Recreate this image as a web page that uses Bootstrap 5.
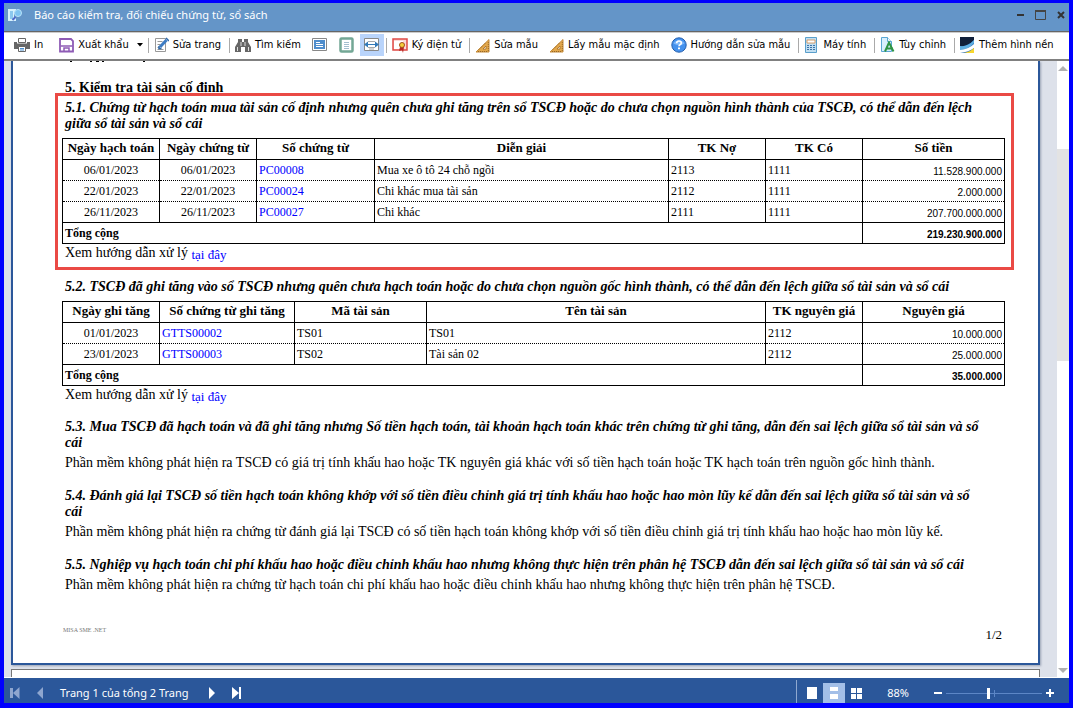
<!DOCTYPE html>
<html lang="vi">
<head>
<meta charset="utf-8">
<meta name="viewport" content="width=device-width, initial-scale=1">
<title>Báo cáo kiểm tra, đối chiếu chứng từ, sổ sách</title>
<link href="https://cdn.jsdelivr.net/npm/bootstrap@5.3.0/dist/css/bootstrap.min.css" rel="stylesheet">
<script src="https://cdn.jsdelivr.net/npm/bootstrap@5.3.0/dist/js/bootstrap.bundle.min.js" defer></script>
<style>
body{font-family:"Noto Sans",sans-serif;font-size:11px;color:#000;line-height:16px}
button{border:0;background:none;padding:0;color:inherit}
svg{flex:none;display:block}
.app{height:100vh;border:4px solid #00f;border-top-width:3px;border-bottom-width:5px}
.titlebar{height:29px;background:#6495c8;border-bottom:1px solid #666;color:#fff;padding:0 2px 4px 4px}
.titlebar h1{font-size:11px;font-weight:400;line-height:16px;margin-left:12px}
.tools{height:29px;border-top:1px solid #ccc;border-bottom:2px solid #808080;padding:0 0 1px 10px;white-space:nowrap;background:#fff;font-family:"DejaVu Sans Condensed","DejaVu Sans",sans-serif}
.tool{display:flex;align-items:center;gap:4px;height:22px}
.tool + .tool{margin-left:11px}
.tool.on{background:#b9d4fb;width:24px;justify-content:center;margin-left:5px}
.tool.on + .sep{margin-left:2px}
.sep{width:1px;height:15px;background:#aaa;margin:0 5px 0 8px}
.canvas{background:#dde1ea;min-width:0}
.sheet{background:#fff;border:2px solid #2b579a;border-top:0;margin:0 17px 0 7px;padding:0 24px 20px 42px;box-shadow:1px 1px 2px #9aa3b5;font-family:"Liberation Serif",serif;font-size:14px}
.sheet-next{border:1px solid #777;border-bottom-color:#ccc;background:#fff;margin:4px 17px 0 7px;height:9px}
.sheet h2,.sheet h3{font-size:14px;line-height:16px;font-weight:700;margin:0;padding:0 18px 0 3px}
.sheet h2{margin:17px 0 -3px;padding-left:10px}
.sheet h3{font-style:italic}
.sheet p{margin:0;padding-left:3px;line-height:20px}
.part{padding:0 9px 0 7px;margin-top:15px}
.part h3 + p{margin-top:2px}
.marked{position:relative;background:#fff;border:3px solid #ea4a45;padding:4px 6px 4px 4px;margin:0}
.marked + .part{margin-top:9px}
.sheet .guide{line-height:18px;margin-bottom:1px}
.grid-table{width:100%;table-layout:fixed;border-collapse:collapse;font-size:12px;margin-top:6px}
.grid-table th,.grid-table td{border:1px solid #000;padding:1px 2px 0;height:21px;line-height:16px}
.grid-table th{text-align:center;font-size:13px;padding:0 2px 1px}
.grid-table tbody td{border-top:1px dotted #000;border-bottom:1px dotted #000}
.grid-table tbody tr:first-child td{border-top:1px solid #000}
.grid-table tbody tr:last-child td{border-bottom:1px solid #000}
.grid-table tfoot td{font-weight:700}
.grid-table a,.sheet p a{color:#00f;text-decoration:none}
.sheet p a{font-size:13px;vertical-align:-2px;line-height:1}
.grid-table .amt{font-family:"Liberation Sans",sans-serif;font-size:10px;text-align:right;padding-top:4px}
.c-code{width:97px}.c-doc{width:118px}.c-inc{width:135px}.c-asset{width:132px}.c-sum{width:142px}
.brand{font-size:6px;color:#777;line-height:6px}
.folio{font-size:13px}
.scroll{width:16px;background:#fff;padding-top:5px}
.thumb{background:#e3e3e3;width:12px;height:212px;margin-top:78px}
.status{height:26px;background:#2b579a;border-top:1px solid #fff;color:#fff;padding:0 14px 0 6px}
.status > *{margin-top:5px}
.status .divider{width:1px;align-self:stretch;background:#8fa8d0;margin:2px 4px 0 0}
.view{width:22px;height:20px;display:flex;align-items:center;justify-content:center}
.view.on{background:#a3bfe8}
.zoomer{appearance:none;background:linear-gradient(#5c86c6,#5c86c6) center/100% 1px no-repeat,linear-gradient(#5c86c6,#5c86c6) 51% center/1px 7px no-repeat;width:96px;height:12px;margin:5px 3px 0}
.zoomer::-webkit-slider-thumb{appearance:none;width:3px;height:11px;background:#fff}
</style>
</head>
<body>
<svg width="0" height="0" class="position-absolute" aria-hidden="true">
<symbol id="ruler" viewBox="0 0 15 15"><path d="M1 14L14 1.500V14z" fill="#e3a84c" stroke="#c48a38"/><path d="M8 11l3-3v3z" fill="#fff" stroke="#a36c24" stroke-width=".8"/><path d="M3 13.500h10M13.300 4v9M4 11.500l7-7" stroke="#8a5c1e" stroke-width=".8" stroke-dasharray="1 1"/></symbol>
</svg>
<div class="app d-flex flex-column overflow-hidden">
<header class="titlebar d-flex align-items-center">
<svg width="14" height="14" viewBox="0 0 14 14"><path d="M0 1h8v3H6v6h2v3H0z" fill="#d6f1fc"/><path d="M2 3h3v8H2z" fill="#8cc8ee"/><circle cx="10" cy="5" r="3.500" fill="#7fc3f0" stroke="#b8e2f8"/><path d="M4.500 12l3-3" stroke="#5068c8" stroke-width="2"/></svg>
<h1 class="mb-0">Báo cáo kiểm tra, đối chiếu chứng từ, sổ sách</h1>
<div class="ms-auto d-flex gap-2">
<button aria-label="Thu nhỏ"><svg width="12" height="12"><path d="M2 6h7" stroke="#333" stroke-width="2"/></svg></button>
<button aria-label="Phóng to"><svg width="12" height="12"><path d="M.500 2v8.500h10V2" fill="none" stroke="#444"/><path d="M0 2h11" stroke="#444" stroke-width="2"/></svg></button>
<button aria-label="Đóng"><svg width="12" height="12"><path d="M3 3l6 6M9 3l-6 6" stroke="#333" stroke-width="2"/></svg></button>
</div>
</header>
<div class="tools d-flex align-items-center" role="toolbar">
<button class="tool"><svg width="16" height="16"><path d="M4.500 1.500h7v4h-7z" fill="#fff" stroke="#666"/><path d="M0 5h3v1.500h10V5h3v7H0z" fill="#666"/><path d="M4.500 9.500h7v5h-7z" fill="#fff" stroke="#666"/><path d="M6 11.500h4M6 13h4" stroke="#4b8fd0"/></svg>In</button>
<button class="tool ms-3"><svg width="15" height="16"><path d="M1 2h11l2 2v10.500H1z" fill="#fff" stroke="#8e5bb5" stroke-width="1.800"/><path d="M1.500 9h12" stroke="#8e5bb5" stroke-width="1.500"/><path d="M5 14v-3h5v3" fill="none" stroke="#8e5bb5" stroke-width="1.500"/></svg>Xuất khẩu<svg class="ms-1" width="7" height="4"><path d="M0 0h6L3 3.500z"/></svg></button>
<span class="sep ms-1"></span>
<button class="tool"><svg width="15" height="16"><path d="M1.500 1.500h10v13h-10z" fill="#fff" stroke="#999"/><path d="M3.500 4.500h5M3.500 7.500h3M3.500 10.500h2M3.500 12.500h6" stroke="#999"/><path d="M6 10l6.500-7" stroke="#3d7cc4" stroke-width="3"/><path d="M12 1l3 3M5 9v2.500h2.500" fill="none" stroke="#2d68aa" stroke-width="1.500"/></svg>Sửa trang</button>
<span class="sep"></span>
<button class="tool"><svg width="16" height="15"><path d="M3 1h4v3h2V1h4v3l3 5v5h-6V9H6v5H0V9l3-5z" fill="#666"/><path d="M6 4v4M10 4v4M2.500 9v4M13.500 9v4" stroke="#ddd"/></svg>Tìm kiếm</button>
<button class="tool" aria-label="Toàn màn hình"><svg width="16" height="14"><path d="M.500.500h14v12H.500z" fill="#fff" stroke="#888"/><path d="M2 2h11v9H2z" fill="#4f8dcc"/><path d="M4 4.500h4M4 6.500h7M4 8.500h7" stroke="#fff"/></svg></button>
<button class="tool" aria-label="Toàn trang"><svg width="16" height="16"><rect x="1.500" y="1.500" width="12" height="13" rx="1" fill="#fff" stroke="#73a795" stroke-width="2.500"/><path d="M5 5.500h5M5 7.500h5M5 9.500h5M5 11.500h5" stroke="#a4bfd0"/></svg></button>
<button class="tool on" aria-label="Vừa chiều rộng"><svg width="16" height="14"><path d="M.500.500h14v12H.500z" fill="#fff" stroke="#888"/><path d="M4 3.500h7M4 9.500h7M5 11h5" stroke="#aaa"/><path d="M3 6.500h9" stroke="#347ab8"/><path d="M0 6.500l4-3v6zM15 6.500l-4-3v6z" fill="#347ab8"/></svg></button>
<span class="sep"></span>
<button class="tool"><svg width="16" height="16"><path d="M1 2h14v11H1z" fill="#fbd9d7" stroke="#e04a45" stroke-width="1.500"/><path d="M2 4h9v8H2z" fill="#fff"/><path d="M8 10l-1 4 3-1 1 3 1-6z" fill="#b62a24"/><circle cx="10" cy="8" r="2.500" fill="#f3cf3b" stroke="#a8501c"/></svg>Ký điện tử</button>
<span class="sep"></span>
<button class="tool"><svg width="15" height="15"><use href="#ruler"/></svg>Sửa mẫu</button>
<button class="tool"><svg width="15" height="15"><use href="#ruler"/></svg>Lấy mẫu mặc định</button>
<button class="tool"><svg width="16" height="16"><circle cx="8" cy="8" r="7.200" fill="#4592ee" stroke="#235fae"/><path d="M2.500 6.500a6 5 0 0111 0q-5.500 3-11 0z" fill="#80b9fa"/><path d="M5.700 6.200q0-2.200 2.300-2.200t2.300 2q0 1.200-1.300 1.800-1 .5-1 1.500" fill="none" stroke="#fff" stroke-width="1.600"/><path d="M7 10.500h2v1.800H7z" fill="#fff"/></svg>Hướng dẫn sửa mẫu</button>
<span class="sep"></span>
<button class="tool"><svg width="15" height="16"><path d="M1.500.500h11v15h-11z" fill="#c2dff2" stroke="#5a9fcb"/><path d="M3 3h8v3H3z" fill="#fff" stroke="#d18b4a" stroke-width=".8"/><path d="M3 8.500h8M3 10.500h8M3 12.500h8" stroke="#3d74a8" stroke-dasharray="2 1"/></svg>Máy tính</button>
<span class="sep"></span>
<button class="tool"><svg width="15" height="16"><path d="M1.500.500h6l4 4v10h-10z" fill="#d8effc" stroke="#5aa7d4"/><path d="M7.500.500v4h4" fill="#fff" stroke="#5aa7d4"/><path d="M5 14.500l4-9 4.500 9M6 11.500h7" fill="none" stroke="#2f9444" stroke-width="2"/></svg>Tùy chỉnh</button>
<span class="sep"></span>
<button class="tool"><svg width="15" height="16"><path d="M0 0h14v16H0z" fill="#2b6fb8"/><path d="M0 0h14v3Q7 10 0 9z" fill="#11203a"/><path d="M0 9q8 1 14-6v3q-5 6-14 7z" fill="#5fb0e4"/><path d="M0 13q9-1 14-6v4q-5 4-14 5z" fill="#fff"/><path d="M4 16q6-1 10-5v5z" fill="#f8d72e"/></svg>Thêm hình nền</button>
</div>
<main class="d-flex flex-grow-1 overflow-hidden">
<div class="canvas flex-grow-1">
<article class="sheet">
<svg width="92" height="2" aria-hidden="true"><path d="M15 .500h2M35 .500h2M41 .500h3M47 .500h2M88 .500h2" stroke="#000"/></svg>
<h2>5. Kiểm tra tài sản cố định</h2>
<section class="part marked">
<h3>5.1. Chứng từ hạch toán mua tài sản cố định nhưng quên chưa ghi tăng trên sổ TSCĐ hoặc do chưa chọn nguồn hình thành của TSCĐ, có thể dẫn đến lệch giữa sổ tài sản và sổ cái</h3>
<table class="grid-table">
<colgroup><col class="c-code"><col class="c-code"><col class="c-doc"><col><col class="c-code"><col class="c-code"><col class="c-sum"></colgroup>
<thead><tr><th>Ngày hạch toán</th><th>Ngày chứng từ</th><th>Số chứng từ</th><th>Diễn giải</th><th>TK Nợ</th><th>TK Có</th><th>Số tiền</th></tr></thead>
<tbody>
<tr><td class="text-center">06/01/2023</td><td class="text-center">06/01/2023</td><td><a href="#">PC00008</a></td><td>Mua xe ô tô 24 chỗ ngồi</td><td>2113</td><td>1111</td><td class="amt">11.528.900.000</td></tr>
<tr><td class="text-center">22/01/2023</td><td class="text-center">22/01/2023</td><td><a href="#">PC00024</a></td><td>Chi khác mua tài sản</td><td>2112</td><td>1111</td><td class="amt">2.000.000</td></tr>
<tr><td class="text-center">26/11/2023</td><td class="text-center">26/11/2023</td><td><a href="#">PC00027</a></td><td>Chi khác</td><td>2111</td><td>1111</td><td class="amt">207.700.000.000</td></tr>
</tbody>
<tfoot><tr><td colspan="6">Tổng cộng</td><td class="amt">219.230.900.000</td></tr></tfoot>
</table>
<p class="guide">Xem hướng dẫn xử lý <a href="#">tại đây</a></p>
</section>
<section class="part">
<h3>5.2. TSCĐ đã ghi tăng vào sổ TSCĐ nhưng quên chưa hạch toán hoặc do chưa chọn nguồn gốc hình thành, có thể dẫn đến lệch giữa sổ tài sản và sổ cái</h3>
<table class="grid-table">
<colgroup><col class="c-code"><col class="c-inc"><col class="c-asset"><col><col class="c-code"><col class="c-sum"></colgroup>
<thead><tr><th>Ngày ghi tăng</th><th>Số chứng từ ghi tăng</th><th>Mã tài sản</th><th>Tên tài sản</th><th>TK nguyên giá</th><th>Nguyên giá</th></tr></thead>
<tbody>
<tr><td class="text-center">01/01/2023</td><td><a href="#">GTTS00002</a></td><td>TS01</td><td>TS01</td><td>2112</td><td class="amt">10.000.000</td></tr>
<tr><td class="text-center">23/01/2023</td><td><a href="#">GTTS00003</a></td><td>TS02</td><td>Tài sản 02</td><td>2112</td><td class="amt">25.000.000</td></tr>
</tbody>
<tfoot><tr><td colspan="5">Tổng cộng</td><td class="amt">35.000.000</td></tr></tfoot>
</table>
<p class="guide">Xem hướng dẫn xử lý <a href="#">tại đây</a></p>
</section>
<section class="part">
<h3>5.3. Mua TSCĐ đã hạch toán và đã ghi tăng nhưng Số tiền hạch toán, tài khoản hạch toán khác trên chứng từ ghi tăng, dẫn đến sai lệch giữa sổ tài sản và sổ cái</h3>
<p>Phần mềm không phát hiện ra TSCĐ có giá trị tính khấu hao hoặc TK nguyên giá khác với số tiền hạch toán hoặc TK hạch toán trên nguồn gốc hình thành.</p>
</section>
<section class="part">
<h3>5.4. Đánh giá lại TSCĐ số tiền hạch toán không khớp với số tiền điều chỉnh giá trị tính khấu hao hoặc hao mòn lũy kế dẫn đến sai lệch giữa sổ tài sản và sổ cái</h3>
<p>Phần mềm không phát hiện ra chứng từ đánh giá lại TSCĐ có số tiền hạch toán không khớp với số tiền điều chỉnh giá trị tính khấu hao hoặc hao mòn lũy kế.</p>
</section>
<section class="part">
<h3>5.5. Nghiệp vụ hạch toán chi phí khấu hao hoặc điều chỉnh khấu hao nhưng không thực hiện trên phân hệ TSCĐ dẫn đến sai lệch giữa sổ tài sản và sổ cái</h3>
<p>Phần mềm không phát hiện ra chứng từ hạch toán chi phí khấu hao hoặc điều chỉnh khấu hao nhưng không thực hiện trên phân hệ TSCĐ.</p>
</section>
<footer class="d-flex justify-content-between align-items-start pt-4 px-2 mt-1"><span class="brand pt-1">MISA SME .NET</span><span class="folio pt-1 pe-1">1/2</span></footer>
</article>
<div class="sheet-next"></div>
</div>
<div class="scroll d-flex flex-column align-items-end">
<svg width="12" height="5"><path d="M1 5l5-5 5 5z" fill="#b0b0b0"/></svg>
<div class="thumb"></div>
<svg class="mt-auto mb-1" width="12" height="5"><path d="M1 0h10L6 5z" fill="#b0b0b0"/></svg>
</div>
</main>
<footer class="status d-flex align-items-center">
<button aria-label="Trang đầu"><svg width="11" height="12"><path d="M1.500 1v10" stroke="#8ea6cf" stroke-width="3"/><path d="M9.500 0v12L3 6z" fill="#8ea6cf"/></svg></button>
<button class="ms-3" aria-label="Trang trước"><svg width="7" height="12"><path d="M6 0v12L0 6z" fill="#8ea6cf"/></svg></button>
<span class="ms-3">Trang 1 của tổng 2 Trang</span>
<button class="ms-3 ps-1" aria-label="Trang sau"><svg width="7" height="12"><path d="M0 0v12l6-6z" fill="#fff"/></svg></button>
<button class="ms-3" aria-label="Trang cuối"><svg width="10" height="12"><path d="M8 0v12" stroke="#fff" stroke-width="2"/><path d="M0 0v12l7-6z" fill="#fff"/></svg></button>
<span class="divider ms-auto"></span>
<button class="view" aria-label="Một trang"><svg width="10" height="12"><path d="M0 0h10v12H0z" fill="#fff"/></svg></button>
<button class="view on" aria-label="Liên tục"><svg width="8" height="12"><path d="M0 0h8v4H0zM0 7h8v5H0z" fill="#fff"/></svg></button>
<button class="view" aria-label="Nhiều trang"><svg width="11" height="11"><path d="M0 0h5v5H0zM6 0h5v5H6zM0 6h5v5H0zM6 6h5v5H6z" fill="#fff"/></svg></button>
<label for="zoom" class="ms-3 me-4 ps-1">88%</label>
<button aria-label="Thu nhỏ trang"><svg width="10" height="10"><path d="M1 5h8" stroke="#fff" stroke-width="2"/></svg></button>
<input id="zoom" class="zoomer" type="range" min="10" max="188" value="88">
<button aria-label="Phóng to trang"><svg width="10" height="10"><path d="M1 5h8M5 1v8" stroke="#fff" stroke-width="2"/></svg></button>
</footer>
</div>
</body>
</html>
